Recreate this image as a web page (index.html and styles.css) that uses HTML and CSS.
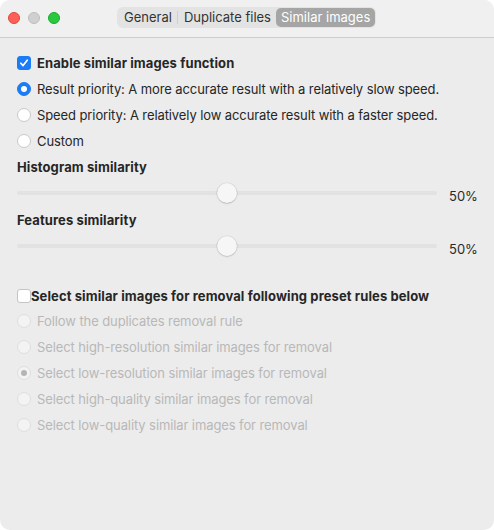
FILE: index.html
```html
<!DOCTYPE html>
<html>
<head>
<meta charset="utf-8">
<link rel="stylesheet" href="styles.css">
</head>
<body>
<div class="window">
  <div class="titlebar">
    <div class="lights">
      <span class="light red"></span>
      <span class="light gray"></span>
      <span class="light green"></span>
    </div>
    <div class="segmented">
      <span class="seg">General</span>
      <span class="sep"></span>
      <span class="seg">Duplicate files</span>
      <span class="seg active">Similar images</span>
    </div>
  </div>
  <div class="content">
    <label class="row bold">
      <span class="checkbox checked">
        <svg viewBox="0 0 14 14" width="14" height="14"><path d="M3.3 7.3 L5.9 10 L10.8 3.8" fill="none" stroke="#fff" stroke-width="2" stroke-linecap="round" stroke-linejoin="round"/></svg>
      </span>
      Enable similar images function
    </label>
    <label class="row"><span class="radio checked"></span>Result priority: A more accurate result with a relatively slow speed.</label>
    <label class="row"><span class="radio"></span>Speed priority: A relatively low accurate result with a faster speed.</label>
    <label class="row"><span class="radio"></span>Custom</label>

    <div class="row label bold">Histogram similarity</div>
    <div class="slider-row">
      <div class="track"><span class="thumb" style="left: 50%"></span></div>
      <span class="value">50%</span>
    </div>
    <div class="row label bold">Features similarity</div>
    <div class="slider-row">
      <div class="track"><span class="thumb" style="left: 50%"></span></div>
      <span class="value">50%</span>
    </div>

    <label class="row bold tight section">
      <span class="checkbox"></span>Select similar images for removal following preset rules below
    </label>
    <label class="row disabled"><span class="radio"></span>Follow the duplicates removal rule</label>
    <label class="row disabled"><span class="radio"></span>Select high-resolution similar images for removal</label>
    <label class="row disabled"><span class="radio checked"></span>Select low-resolution similar images for removal</label>
    <label class="row disabled"><span class="radio"></span>Select high-quality similar images for removal</label>
    <label class="row disabled"><span class="radio"></span>Select low-quality similar images for removal</label>
  </div>
</div>
</body>
</html>
```

FILE: styles.css
```css
* { box-sizing: border-box; }
html, body { margin: 0; padding: 0; background: #ffffff; }
body {
  font-family: Inter, "Noto Sans", "Liberation Sans", sans-serif;
  font-size: 13px;
  color: #262626;
  letter-spacing: -0.1px;
}
.window {
  width: 494px;
  height: 530px;
  background: #ececec;
  border-radius: 10px;
  overflow: hidden;
  display: flex;
  flex-direction: column;
}
.titlebar {
  height: 38px;
  background: #f0f0f0;
  border-bottom: 1px solid #cdcdcd;
  display: flex;
  align-items: center;
  padding-left: 8px;
}
.lights { display: flex; gap: 8px; margin-top: -2px; }
.light { width: 12px; height: 12px; border-radius: 50%; display: block; }
.red { background: #fe5f57; border: 0.5px solid #e2463f; }
.gray { background: #d0d0d0; border: 0.5px solid #bdbdbd; }
.green { background: #28c840; border: 0.5px solid #1aab29; }
.segmented {
  margin-left: 57px;
  margin-top: -2px;
  display: flex;
  align-items: center;
  height: 21px;
  background: #e3e3e3;
  border-radius: 6px;
  padding: 1px;
  letter-spacing: 0;
}
.seg {
  padding: 0 5px 0 6px;
  height: 19px;
  line-height: 19px;
  color: #333;
  border-radius: 5px;
}
.sep { width: 1px; height: 13px; background: #cfcfcf; }
.seg.active { background: #a5a5a5; color: #fff; padding: 0 5px; }
.content {
  padding: 12px 18px 0 17px;
  display: flex;
  flex-direction: column;
}
.row {
  height: 26px;
  display: flex;
  align-items: center;
  gap: 6px;
}
.bold { font-weight: 700; letter-spacing: 0.1px; }
.tight { gap: 0; }
.section { margin-top: 24px; height: 24px; }
.checkbox {
  width: 14px;
  height: 14px;
  border-radius: 3px;
  background: #fff;
  border: 1px solid #c4c4c4;
  display: flex;
  align-items: center;
  justify-content: center;
  flex: none;
}
.checkbox.checked { background: #1b7cf6; border-color: #1b7cf6; }
.radio {
  width: 14px;
  height: 14px;
  border-radius: 50%;
  background: #fff;
  border: 1px solid #c9c9c9;
  flex: none;
  display: flex;
  align-items: center;
  justify-content: center;
}
.radio.checked { background: #1b7cf6; border-color: #1b7cf6; }
.radio.checked::after {
  content: "";
  width: 6px; height: 6px; border-radius: 50%; background: #fff;
}
.disabled { color: #b8b8b8; }
.disabled .radio { background: #f3f3f3; border-color: #dedede; }
.disabled .radio.checked { background: #f3f3f3; border-color: #dedede; }
.disabled .radio.checked::after { background: #b5b5b5; width: 6px; height: 6px; }
.slider-row {
  height: 27px;
  display: flex;
  align-items: center;
}
.track {
  position: relative;
  flex: none;
  width: 420px;
  height: 4px;
  border-radius: 2px;
  background: #e2e2e2;
  margin-top: -2px;
}
.thumb {
  position: absolute;
  top: 50%;
  width: 20px;
  height: 20px;
  border-radius: 50%;
  background: #f6f6f6;
  box-shadow: 0 0.5px 1.5px rgba(0,0,0,0.25), 0 0 0 0.5px rgba(0,0,0,0.06);
  transform: translate(-50%, -50%);
}
.value { margin-left: 12px; margin-top: 5px; color: #2a2a2a; letter-spacing: 0; white-space: nowrap; }
```
